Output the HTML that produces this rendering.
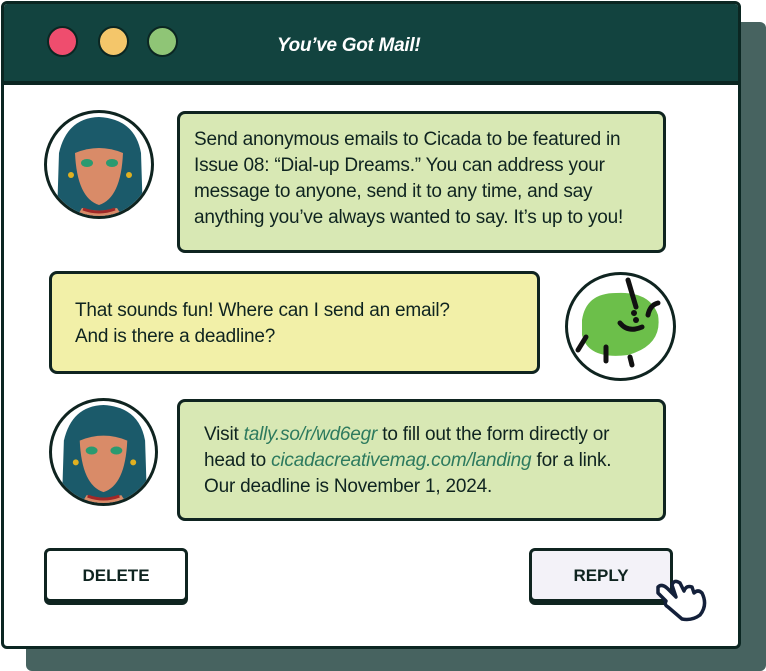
<!DOCTYPE html>
<html><head><style>
*{margin:0;padding:0;box-sizing:border-box}
body{width:766px;height:671px;background:#fff;position:relative;overflow:hidden;font-family:"Liberation Sans",Arial,sans-serif;color:#0f2420}
.sh{position:absolute;left:26px;top:22px;width:740px;height:649px;background:#476360;border-radius:6px}
.win{position:absolute;left:1px;top:1px;width:740px;height:648px;background:#fff;border:3px solid #0b2622;border-radius:6px;overflow:hidden}
.hd{position:absolute;left:0;top:0;width:100%;height:81px;background:#12433f;border-bottom:4px solid #0b2622}
.dot{position:absolute;top:22px;width:31px;height:31px;border-radius:50%;border:2px solid #0b2622}
.title{position:absolute;left:273px;top:31px;color:#fff;font-style:italic;font-weight:bold;font-size:19px;letter-spacing:-0.3px}
.b{position:absolute;border:3px solid #0f2420;border-radius:8px;font-size:19px;line-height:26px;letter-spacing:-0.2px}
.av{position:absolute;border:3px solid #0f2420;border-radius:50%;overflow:hidden;background:#fff}
a{color:#2d7a5e;font-style:italic;text-decoration:none}
.btn{position:absolute;border:3px solid #0f2420;border-radius:6px;font-weight:bold;font-size:17px;text-align:center;line-height:50px;box-shadow:0 3px 0 #0f2420}
</style></head><body>
<div class="sh"></div>
<div class="win">
<div class="hd">
<div class="dot" style="left:43px;background:#ef4d6e"></div>
<div class="dot" style="left:94px;background:#f4c66a"></div>
<div class="dot" style="left:143px;background:#8fc576"></div>
<div class="title">You’ve Got Mail!</div>
</div>
</div>
<div class="av" style="left:44px;top:110px;width:110px;height:109px">
<svg width="104" height="103" viewBox="0 0 104 103"><path d="M10 103 L12 40 Q20 5 52 4 Q88 6 94 40 L96 103Z" fill="#1b5a6a"/><path d="M28 40 Q30 85 52 92 Q74 85 76 40 Q52 30 28 40Z" fill="#d98b68"/><path d="M35 95 Q52 100 70 95 L75 103 L30 103Z" fill="#d98b68"/><path d="M36 96 Q52 102 68 96" stroke="#a02828" stroke-width="3" fill="none"/><ellipse cx="40" cy="50" rx="6" ry="4" fill="#2a9a70"/><ellipse cx="65" cy="50" rx="6" ry="4" fill="#2a9a70"/><circle cx="24" cy="62" r="3" fill="#e0b020"/><circle cx="82" cy="62" r="3" fill="#e0b020"/></svg>
</div>
<div class="b" style="left:177px;top:111px;width:489px;height:142px;background:#d8e8b4;padding:13px 0 0 14px">Send anonymous emails to Cicada to be featured in<br>Issue 08: “Dial-up Dreams.” You can address your<br>message to anyone, send it to any time, and say<br>anything you’ve always wanted to say. It’s up to you!</div>
<div class="b" style="left:49px;top:271px;width:491px;height:103px;background:#f2f0a8;padding:24px 0 0 23px">That sounds fun! Where can I send an email?<br>And is there a deadline?</div>
<div class="av" style="left:565px;top:272px;width:111px;height:109px">
<svg width="105" height="103" viewBox="0 0 105 103"><path d="M14 45 Q18 18 48 18 Q82 16 90 40 Q95 70 60 80 Q20 85 14 60Z" fill="#6cbf4a"/><g stroke="#111" stroke-width="5" stroke-linecap="round" fill="none"><path d="M60 5 L68 32"/><path d="M80 40 Q82 30 90 28"/><path d="M52 48 Q60 58 74 52"/><path d="M10 75 L18 62"/><path d="M38 72 L38 86"/><path d="M62 82 L64 90"/></g><circle cx="66" cy="38" r="3" fill="#111"/><circle cx="68" cy="45" r="3" fill="#111"/></svg>
</div>
<div class="av" style="left:49px;top:398px;width:109px;height:108px">
<svg width="103" height="102" viewBox="0 0 104 103"><path d="M10 103 L12 40 Q20 5 52 4 Q88 6 94 40 L96 103Z" fill="#1b5a6a"/><path d="M28 40 Q30 85 52 92 Q74 85 76 40 Q52 30 28 40Z" fill="#d98b68"/><path d="M35 95 Q52 100 70 95 L75 103 L30 103Z" fill="#d98b68"/><path d="M36 96 Q52 102 68 96" stroke="#a02828" stroke-width="3" fill="none"/><ellipse cx="40" cy="50" rx="6" ry="4" fill="#2a9a70"/><ellipse cx="65" cy="50" rx="6" ry="4" fill="#2a9a70"/><circle cx="24" cy="62" r="3" fill="#e0b020"/><circle cx="82" cy="62" r="3" fill="#e0b020"/></svg>
</div>
<div class="b" style="left:177px;top:399px;width:489px;height:122px;background:#d8e8b4;padding:20px 0 0 24px">Visit <a>tally.so/r/wd6egr</a> to fill out the form directly or<br>head to <a>cicadacreativemag.com/landing</a> for a link.<br>Our deadline is November 1, 2024.</div>
<div class="btn" style="left:44px;top:548px;width:144px;height:54px;background:#fff">DELETE</div>
<div class="btn" style="left:529px;top:548px;width:144px;height:54px;background:#f3f2f8">REPLY</div>
<svg style="position:absolute;left:654px;top:575px" width="54" height="48" viewBox="0 0 54 48"><path d="M4 12 Q8 8 14 14 L22 22 L18 10 Q20 4 26 8 L30 16 Q32 10 38 12 L40 18 Q44 14 48 18 Q54 30 46 40 Q38 46 28 44 L14 32 Q10 30 12 26 L4 18Z" fill="#fff" stroke="#13203a" stroke-width="3.5" stroke-linejoin="round"/></svg>
</body></html>
